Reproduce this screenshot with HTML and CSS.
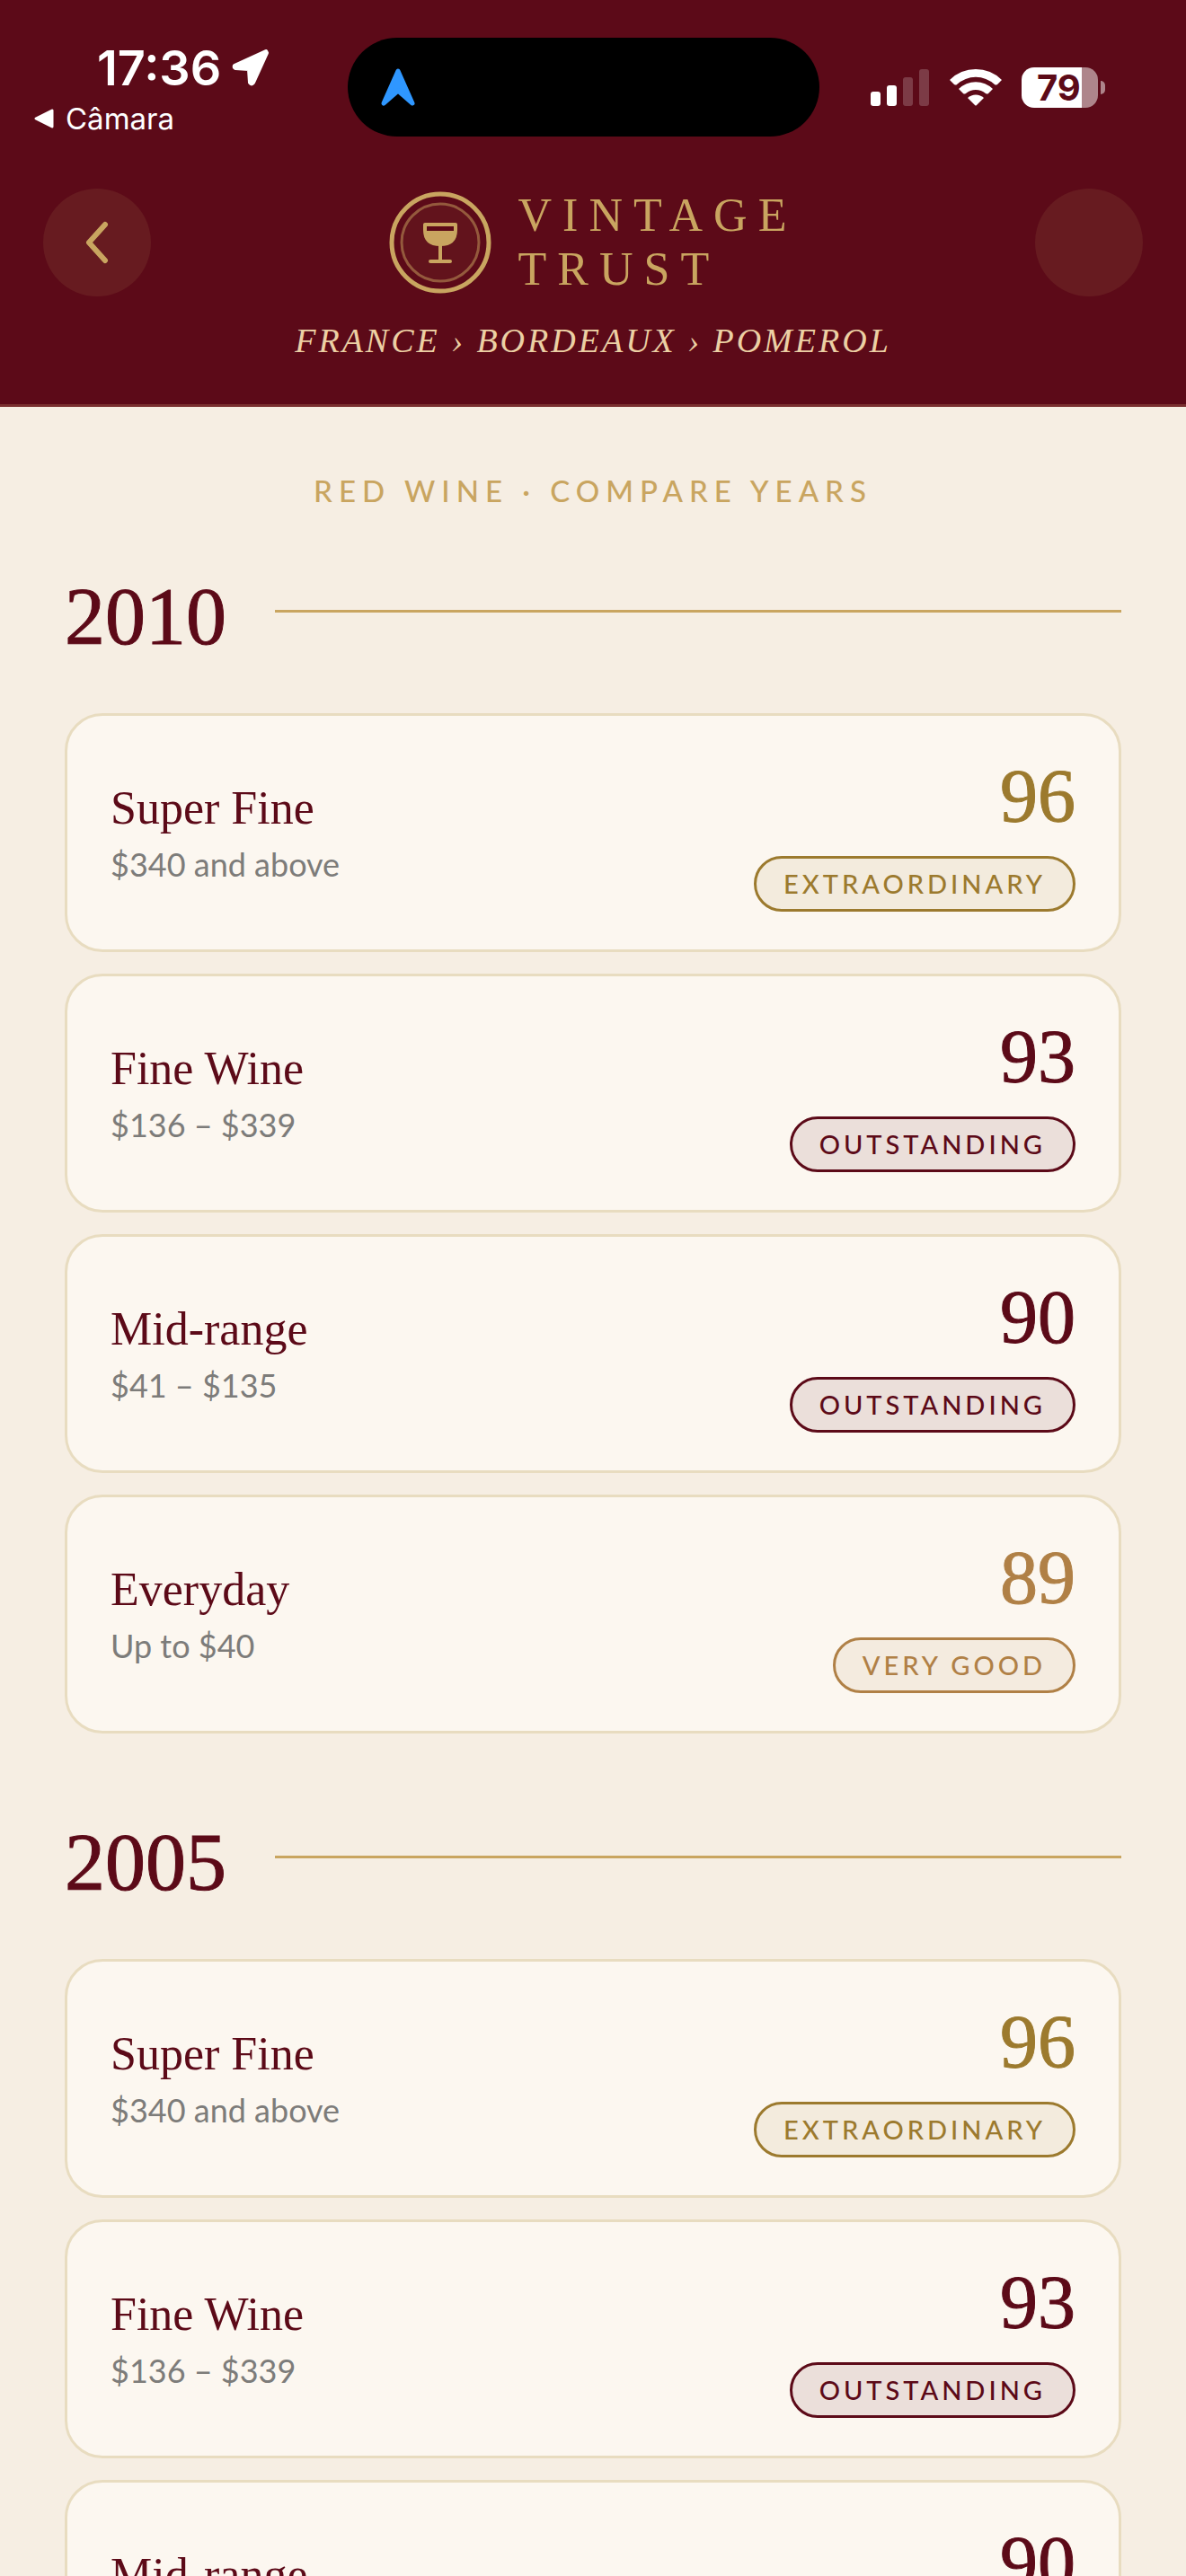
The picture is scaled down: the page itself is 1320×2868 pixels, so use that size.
FILE: index.html
```html
<!DOCTYPE html>
<html lang="en">
<head>
  <meta charset="utf-8">
  <meta name="viewport" content="width=device-width, initial-scale=1">
  <title>Vintage Trust</title>
  <link rel="stylesheet" href="styles.css">
</head>

<body>
  <header class="header">
    <div class="status">
      <div class="status-left">
        <div class="clock">
          <span>17:36</span>
          <svg width="42" height="42" viewBox="0 0 42 42"><path d="M38 3 L3 19 Q2 21 4 22 L19 23 L20 38 Q22 41 24 38 L39 5 Z" fill="#fff" stroke="#fff" stroke-width="4" stroke-linejoin="round"/></svg>
        </div>
        <a class="back-app" href="#">
          <svg width="24" height="24" viewBox="0 0 24 24"><path d="M3 12 L21 3 V21 Z" fill="#fff" stroke="#fff" stroke-width="3" stroke-linejoin="round"/></svg>
          Câmara
        </a>
      </div>
      <div class="island">
        <svg width="40" height="44" viewBox="0 0 40 44"><path d="M20 4 L36 40 L20 26 L4 40 Z" fill="#2f97ff" stroke="#2f97ff" stroke-width="5" stroke-linejoin="round"/></svg>
      </div>
      <div class="status-right">
        <svg width="66" height="42" viewBox="0 0 66 42" fill="#fff">
          <rect x="0" y="26" width="11" height="16" rx="3"/>
          <rect x="18" y="19" width="11" height="23" rx="3"/>
          <rect x="36" y="10" width="11" height="32" rx="3" opacity=".2"/>
          <rect x="54" y="1" width="11" height="41" rx="3" opacity=".2"/>
        </svg>
        <svg width="58" height="42" viewBox="0 0 58 42" fill="#fff">
          <path d="M0 13 A41 41 0 0 1 58 13 L53 18 Q51 19 50 18 A31 31 0 0 0 8 18 Q7 19 5 18 Z"/>
          <path d="M10 23 A27 27 0 0 1 48 23 L43 28 Q42 29 40 28 A17 17 0 0 0 18 28 Q16 29 15 28 Z"/>
          <path d="M20 33 A13 13 0 0 1 38 33 L30 41 Q29 42 28 41 Z"/>
        </svg>
        <div class="battery"><span>79</span></div>
      </div>
    </div>

    <div class="nav">
      <button class="round" type="button" aria-label="Back">
        <svg width="28" height="54" viewBox="0 0 28 54"><path d="M23 7 L5 27 L23 47" fill="none" stroke="#c9a560" stroke-width="6" stroke-linecap="round" stroke-linejoin="round"/></svg>
      </button>
      <div class="brand">
        <svg width="114" height="114" viewBox="0 0 114 114">
          <circle cx="57" cy="57" r="54" fill="none" stroke="#c9a560" stroke-width="5"/>
          <circle cx="57" cy="57" r="43" fill="#c9a560" fill-opacity=".06" stroke="#c9a560" stroke-opacity=".5" stroke-width="3"/>
          <path d="M40 35 H74 Q76 35 76 37 V43 Q76 61 57 61 Q38 61 38 43 V37 Q38 35 40 35 Z" fill="#c9a560"/>
          <rect x="42" y="39" width="30" height="5" fill="#5c0a18"/>
          <path d="M57 60 V78 M46 78 H68" stroke="#c9a560" stroke-width="4" stroke-linecap="round"/>
        </svg>
        <h1>VINTAGE<br>TRUST</h1>
      </div>
      <button class="round" type="button" aria-label="Menu"></button>
    </div>

    <p class="crumbs">FRANCE › BORDEAUX › POMEROL</p>
  </header>

  <main>
    <p class="eyebrow">RED WINE · COMPARE YEARS</p>

    <section>
      <h2><span>2010</span></h2>
      <ul>
        <li class="card gold">
          <div><h3>Super Fine</h3><p>$340 and above</p></div>
          <div class="rating"><strong>96</strong><span>EXTRAORDINARY</span></div>
        </li>
        <li class="card wine">
          <div><h3>Fine Wine</h3><p>$136 – $339</p></div>
          <div class="rating"><strong>93</strong><span>OUTSTANDING</span></div>
        </li>
        <li class="card wine">
          <div><h3>Mid-range</h3><p>$41 – $135</p></div>
          <div class="rating"><strong>90</strong><span>OUTSTANDING</span></div>
        </li>
        <li class="card bronze">
          <div><h3>Everyday</h3><p>Up to $40</p></div>
          <div class="rating"><strong>89</strong><span>VERY GOOD</span></div>
        </li>
      </ul>
    </section>

    <section>
      <h2><span>2005</span></h2>
      <ul>
        <li class="card gold">
          <div><h3>Super Fine</h3><p>$340 and above</p></div>
          <div class="rating"><strong>96</strong><span>EXTRAORDINARY</span></div>
        </li>
        <li class="card wine">
          <div><h3>Fine Wine</h3><p>$136 – $339</p></div>
          <div class="rating"><strong>93</strong><span>OUTSTANDING</span></div>
        </li>
        <li class="card wine">
          <div><h3>Mid-range</h3><p>$41 – $135</p></div>
          <div class="rating"><strong>90</strong><span>OUTSTANDING</span></div>
        </li>
      </ul>
    </section>
  </main>
</body>

</html>
```
FILE: styles.css
```css
* {
  box-sizing: border-box;
  margin: 0;
  padding: 0;
}

html {
  height: 100%;
  overflow: hidden;
}

body {
  height: 100%;
  overflow: hidden;
  background: #f6eee3;
  font-family: Lato, sans-serif;
}

svg {
  display: block;
  flex: none;
}

.header {
  background: #5c0a18;
  border-bottom: 3px solid #7a2f2f;
}

/* status bar */
.status {
  display: grid;
  grid-template-columns: 1fr 525px 1fr;
  height: 210px;
  padding: 42px 21px 0 0;
  color: #fff;
  font-family: Inter, sans-serif;
}

.clock {
  display: flex;
  align-items: center;
  gap: 12px;
  height: 66px;
  padding-left: 108px;
  font-size: 54px;
  font-weight: 600;
}

.back-app {
  display: flex;
  align-items: center;
  gap: 12px;
  height: 48px;
  padding-left: 37px;
  color: #fff;
  font-size: 33px;
  text-decoration: none;
}

.island {
  display: flex;
  align-items: center;
  height: 110px;
  padding: 0 36px;
  border-radius: 55px;
  background: #000;
}

.status-right {
  display: flex;
  align-items: center;
  gap: 22px;
  height: 110px;
  padding-left: 57px;
}

.battery {
  position: relative;
  width: 85px;
  height: 45px;
  padding-left: 17px;
  border-radius: 14px;
  background: linear-gradient(to right, #fff 67px, #ae858b 67px);
  color: #5c0a18;
  font-size: 40px;
  font-weight: 700;
  line-height: 45px;
}

.battery::after {
  content: "";
  position: absolute;
  top: 15px;
  right: -8px;
  width: 5px;
  height: 15px;
  border-radius: 0 5px 5px 0;
  background: #ae858b;
}

/* title bar */
.nav {
  display: flex;
  align-items: center;
  justify-content: space-between;
  padding: 0 48px;
}

.round {
  display: flex;
  align-items: center;
  justify-content: center;
  width: 120px;
  height: 120px;
  border: 0;
  border-radius: 50%;
  background: #671b20;
}

.brand {
  display: flex;
  align-items: center;
  gap: 30px;
}

.brand h1 {
  color: #c9a560;
  font: 400 52px/60px "Liberation Serif", serif;
  letter-spacing: 12px;
}

.crumbs {
  padding: 25px 0 47px;
  color: #ecd0a4;
  font: italic 38px/48px "Liberation Serif", serif;
  letter-spacing: 3px;
  text-align: center;
}

main {
  padding: 72px 72px 0;
}

.eyebrow {
  color: #c9a560;
  font-size: 33px;
  font-weight: 500;
  line-height: 42px;
  letter-spacing: 7px;
  text-align: center;
}

section {
  margin-bottom: 84px;
}

section h2 {
  display: flex;
  align-items: center;
  gap: 54px;
  height: 107px;
  margin-bottom: 60px;
  color: #5c0a18;
  font: 400 90px/95px "Liberation Serif", serif;
  -webkit-text-stroke: 1px #5c0a18;
}

section h2 span {
  padding-top: 12px;
}

.eyebrow + section {
  margin-top: 60px;
}

section h2::after {
  content: "";
  flex: 1;
  height: 3px;
  background: #c9a560;
}

ul {
  display: grid;
  gap: 24px;
  list-style: none;
}

.card {
  display: flex;
  align-items: center;
  justify-content: space-between;
  height: 266px;
  padding: 0 48px;
  border: 3px solid #e8dcc0;
  border-radius: 42px;
  background: #fcf7f0;
}

.card h3 {
  color: #5c0a18;
  font: 400 52px/70px "Liberation Serif", serif;
}

.card p {
  color: #7d7c7a;
  font-size: 36px;
  line-height: 54px;
}

.rating {
  display: flex;
  flex-direction: column;
  align-items: flex-end;
}

.rating strong {
  font: 400 84px/96px "Liberation Serif", serif;
  -webkit-text-stroke: 1px;
}

.rating span {
  margin-top: 18px;
  padding: 0 30px;
  border: 3px solid;
  border-radius: 31px;
  font-size: 29px;
  font-weight: 500;
  line-height: 56px;
  letter-spacing: 4px;
}

.gold {
  color: #9c7a2e;
}

.gold span {
  background: #f3ebdd;
}

.wine {
  color: #5c0a18;
}

.wine span {
  background: #ebdfda;
}

.bronze {
  color: #b08046;
}

.bronze span {
  background: #f4ebdf;
}
```
